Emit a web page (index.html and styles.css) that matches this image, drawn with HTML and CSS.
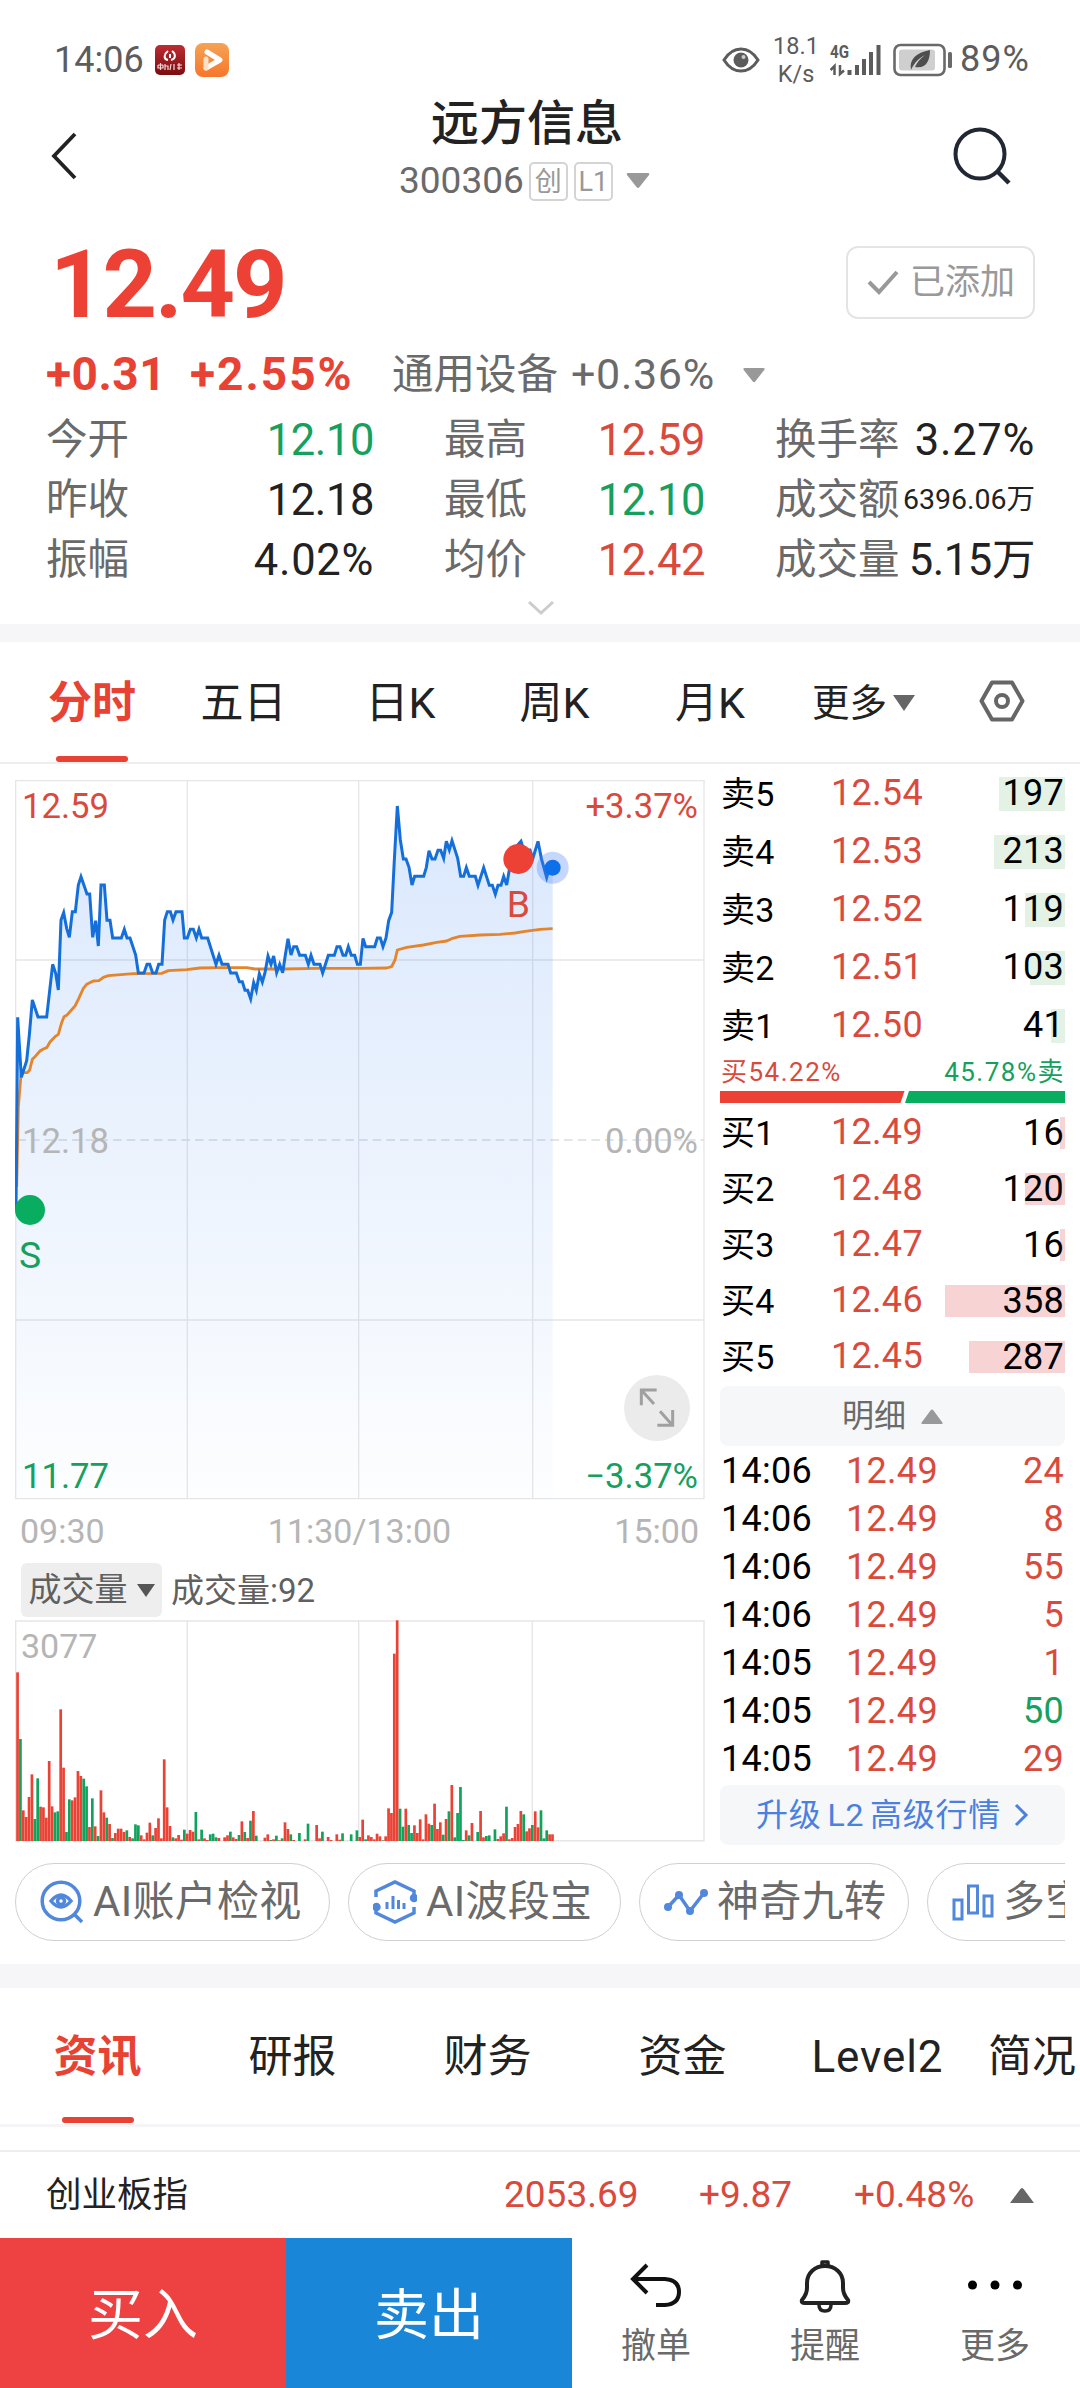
FILE: index.html
```html
<!DOCTYPE html>
<html lang="zh-CN">
<head>
<title>远方信息 300306</title>
<meta charset="utf-8">
<meta name="viewport" content="width=1080" />
<link rel="stylesheet" href="styles.css">
</head>
<body>
<div class="phone">

	<div class="status">
		<span class="clock">14:06</span>
		<svg class="app_red" width="30" height="30" viewBox="0 0 30 30">
			<defs><linearGradient id="g_red" x1="0" y1="0" x2="0" y2="1"><stop offset="0" stop-color="#bd2c32"/><stop offset="1" stop-color="#7b0d10"/></linearGradient></defs>
			<rect width="30" height="30" rx="5" fill="url(#g_red)"/>
			<path d="M13 6c-4 3-5 8 0 9M17 6c4 3 4 8-1 9M15 9v4" fill="none" stroke="#fff" stroke-width="2"/>
			<path d="M3 20h5M5.500 18v7M3 20v3h5v-3M10 19v6M10 21h3v4M16 19l-1 6M19 19v6M22 20h5M24 18v7M22 23h5" fill="none" stroke="#f3dada" stroke-width="1.200"/>
		</svg>
		<svg class="app_orange" width="34" height="34" viewBox="0 0 34 34">
			<defs><linearGradient id="g_or" x1="0" y1="0" x2="0" y2="1"><stop offset="0" stop-color="#f7a354"/><stop offset="1" stop-color="#f5762b"/></linearGradient></defs>
			<rect width="34" height="34" rx="8" fill="url(#g_or)"/>
			<path d="M12 9l13 8-14 8" fill="none" stroke="#fff" stroke-width="5" stroke-linejoin="round" stroke-linecap="round"/>
			<path d="M11 25v-9" stroke="#ffe0c4" stroke-width="5" stroke-linecap="round"/>
		</svg>
		<svg class="eye" width="38" height="26" viewBox="0 0 38 26">
			<path d="M2 13C7 5 13 2 19 2s12 3 17 11c-5 8-11 11-17 11S7 21 2 13z" fill="none" stroke="#5c5c5c" stroke-width="3"/>
			<circle cx="19" cy="13" r="7.500" fill="#5c5c5c"/><circle cx="21.500" cy="10" r="2" fill="#ccc"/>
		</svg>
		<div class="speed"><span>18.1</span><span>K/s</span></div>
		<svg class="signal" width="52" height="34" viewBox="0 0 52 34">
			<text x="0" y="15" class="net" textLength="19" lengthAdjust="spacingAndGlyphs">4G</text>
			<path d="M4.500 32V23l-4 4M10 22v9l4-3.500" fill="none" stroke="#5c5c5c" stroke-width="2.500"/>
			<path d="M19.500 32v-5M27 32V22M34 32V16M41 32V9M48.500 32V2" stroke="#5c5c5c" stroke-width="4"/>
		</svg>
		<svg class="battery" width="60" height="34" viewBox="0 0 60 34">
			<rect x="1.500" y="2" width="50" height="30" rx="6" fill="none" stroke="#6a6a6a" stroke-width="2.600"/>
			<rect x="6" y="6.500" width="36" height="21" rx="3" fill="#cfcfcf"/>
			<path d="M18 27c-2-11 5-17 19-20 0 11-4 19-15 17 2-5 6-9 10-12-6 3-11 8-14 15z" fill="#4e4e4e"/>
			<rect x="55" y="9" width="4" height="16" rx="1.500" fill="#6a6a6a"/>
		</svg>
		<span class="percent">89%</span>
	</div>

	<header class="top">
		<svg class="back" width="30" height="50" viewBox="0 0 30 50"><path d="M25 3L4 25l21 22" fill="none" stroke="#222" stroke-width="3.800"/></svg>
		<div class="stock">
			<h1>远方信息</h1>
			<div class="code">
				<span>300306</span><i class="badge">创</i><i class="badge">L1</i>
				<svg width="24" height="16" viewBox="0 0 24 16"><path d="M2 0h20q2 0 1 2L13.500 14q-1.500 2-3 0L1 2Q0 0 2 0z" fill="#999"/></svg>
			</div>
		</div>
		<svg class="search" width="60" height="60" viewBox="0 0 60 60"><circle cx="28" cy="28" r="24.500" fill="none" stroke="#222734" stroke-width="4"/><path d="M45 45l12 12" stroke="#222734" stroke-width="4.500"/></svg>
	</header>

	<section class="quote">
		<div class="price_row">
			<span class="price">12.49</span>
			<div class="added">
				<svg width="32" height="26" viewBox="0 0 32 26"><path d="M2 12l10 10L30 2" fill="none" stroke="#999" stroke-width="4"/></svg>
				<span>已添加</span>
			</div>
		</div>
		<div class="change">
			<b>+0.31</b><b class="pct">+2.55%</b>
			<span class="sector">通用设备</span><span class="sector_pct">+0.36%</span>
			<svg width="24" height="15" viewBox="0 0 24 16"><path d="M2 0h20q2 0 1 2L13.500 14q-1.500 2-3 0L1 2Q0 0 2 0z" fill="#999"/></svg>
		</div>
		<div class="stats">
			<div><label>今开</label><em class="down">12.10</em></div>
			<div><label>最高</label><em class="up">12.59</em></div>
			<div><label>换手率</label><em class="wide">3.27%</em></div>
			<div><label>昨收</label><em>12.18</em></div>
			<div><label>最低</label><em class="down">12.10</em></div>
			<div><label>成交额</label><em class="small">6396.06万</em></div>
			<div><label>振幅</label><em class="wide">4.02%</em></div>
			<div><label>均价</label><em class="up">12.42</em></div>
			<div><label>成交量</label><em>5.15万</em></div>
		</div>
		<svg class="expand" width="28" height="16" viewBox="0 0 28 16"><path d="M2 2l12 11L26 2" fill="none" stroke="#ccc" stroke-width="3"/></svg>
	</section>

	<nav class="periods">
		<span class="on">分时</span><span>五日</span><span class="day">日K</span><span>周K</span><span>月K</span>
		<span class="more">更多<svg width="24" height="16" viewBox="0 0 24 16"><path d="M1 0h22L12 16z" fill="#666"/></svg></span>
		<span class="gear"><svg width="46" height="42" viewBox="0 0 46 42"><path d="M13 2.500h20L43.500 21 33 39.500H13L2.500 21z" fill="none" stroke="#666" stroke-width="4" stroke-linejoin="round"/><circle cx="23" cy="21" r="6" fill="none" stroke="#666" stroke-width="4"/></svg></span>
	</nav>

	<section class="market">
		<div class="charts">
			<!-- minute line: 3 units = 1px, 8.78px per 0.01 -->
			<svg class="line_chart" width="690" height="720" viewBox="45 30 2070 2160">
				<defs><linearGradient id="g_area" gradientUnits="userSpaceOnUse" x1="0" y1="100" x2="0" y2="2180"><stop offset="0" stop-color="#0a66f0" stop-opacity=".15"/><stop offset="1" stop-color="#0a66f0" stop-opacity=".01"/></linearGradient></defs>
				<g fill="none" stroke="#e6e6e8" stroke-width="4">
					<path d="M47 32H2112V2186H47zM562 32V2186M1076 32V2186M1598 32V2186"/>
					<path d="M47 570H2112M47 1650H2112" stroke-width="5"/>
					<path d="M52 1110H2112" stroke-dasharray="26 15" stroke="#dcdde0"/>
				</g>
				<polygon id="area" fill="url(#g_area)"/>
				<polyline class="avg" points="50,1250 52,1155 55,1010 63,915 70,908 82,908 89,900 97,868 105,860 120,843 130,837 140,833 150,816 165,800 175,793 185,758 192,740 200,736 225,708 235,688 250,655 260,643 280,633 297,632 310,622 325,617 400,611 485,610 505,602 560,599 600,594 650,593 740,593 765,597 850,597 950,595 1080,595 1160,594 1175,590 1185,570 1192,540 1220,532 1270,525 1310,517 1340,513 1355,506 1380,499 1440,495 1500,493 1545,489 1575,484 1620,478 1658,476"/>
				<polyline class="now" id="now" points="48,1320 53,742 64,922 80,872 88,795 97,690 114,741 140,741 158,583 167,610 175,660 183,450 191,428 200,475 208,502 217,425 226,425 235,345 243,320 261,372 269,372 278,502 287,452 295,528 303,345 313,345 321,451 330,451 338,504 364,504 373,478 381,504 390,504 407,555 415,609 432,609 441,583 449,583 458,609 468,609 476,583 486,583 494,450 502,425 511,425 519,450 528,425 546,425 553,504 562,504 571,478 580,478 589,504 597,478 605,504 623,504 648,583 657,556 666,583 684,583 692,609 709,609 718,635 727,635 735,661 743,661 752,687 761,638 769,661 778,611 787,636 795,608 804,558 813,583 821,558 830,608 839,583 848,608 856,555 864,506 873,555 881,530 890,530 899,556 916,556 925,583 933,556 942,583 960,583 968,609 985,556 1003,556 1011,530 1020,530 1029,556 1037,556 1045,530 1054,556 1064,556 1072,583 1081,583 1089,505 1097,530 1124,530 1132,504 1141,504 1149,530 1158,504 1166,452 1175,427 1183,270 1192,108 1201,210 1210,267 1218,267 1227,292 1236,345 1244,319 1271,319 1279,292 1287,242 1296,267 1305,267 1314,241 1322,241 1331,265 1339,214 1348,240 1356,212 1373,265 1382,319 1391,319 1399,293 1408,319 1426,319 1434,346 1451,293 1468,346 1477,346 1486,373 1494,346 1503,346 1511,319 1520,345 1529,293 1540,240 1563,214 1571,240 1590,240 1598,267 1614,214 1624,265 1640,322 1648,293 1658,293"/>
				<g class="axis">
					<text x="66" y="143" class="red">12.59</text>
					<text x="2094" y="143" class="red end">+3.37%</text>
					<text x="66" y="1148">12.18</text>
					<text x="2094" y="1148" class="end">0.00%</text>
					<text x="66" y="2153" class="green">11.77</text>
					<text x="2094" y="2153" class="green end">−3.37%</text>
				</g>
				<circle cx="90" cy="1320" r="45" fill="#09ad5f"/>
				<text x="90" y="1495" class="mark green">S</text>
				<circle cx="1555" cy="267" r="45" fill="#ee4135"/>
				<text x="1555" y="442" class="mark red">B</text>
				<circle cx="1658" cy="293" r="48" fill="#3f7bf5" fill-opacity=".3"/>
				<circle cx="1658" cy="293" r="24" fill="#0d70ea"/>
				<circle cx="1971" cy="1914" r="99" fill="#ebebeb"/>
				<path d="M1924 1906V1860H1970M1926 1862L1962 1902M2018 1920V1966H1972M2016 1964L1980 1924" fill="none" stroke="#a0a0a0" stroke-width="9"/>
			</svg>
			<div class="times"><span>09:30</span><span>11:30/13:00</span><span>15:00</span></div>
			<div class="vol_head">
				<span class="vol_btn">成交量<svg width="18" height="13" viewBox="0 0 18 13"><path d="M0 0h18L9 13z" fill="#555"/></svg></span>
				<span>成交量:92</span>
			</div>
			<svg class="vol_chart" width="690" height="222" viewBox="0 0 690 222">
				<path d="M.700 1H689V220.700H.700zM172.300 1V221M343.700 1V221M517.300 1V221" fill="none" stroke="#e6e6e8" stroke-width="1.400"/>
				<g id="bars"></g>
				<text x="6" y="38" class="max">3077</text>
			</svg>
		</div>

		<div class="book">
			<div class="sell">
				<div><span>卖5</span><em>12.54</em><i style="--w:66px">197</i></div>
				<div><span>卖4</span><em>12.53</em><i style="--w:71px">213</i></div>
				<div><span>卖3</span><em>12.52</em><i style="--w:40px">119</i></div>
				<div><span>卖2</span><em>12.51</em><i style="--w:35px">103</i></div>
				<div><span>卖1</span><em>12.50</em><i style="--w:14px">41</i></div>
			</div>
			<div class="ratio"><span class="up">买54.22%</span><span class="down">45.78%卖</span></div>
			<svg class="ratio_bar" width="345" height="12" viewBox="0 0 345 12"><path d="M0 0H184.500L180.500 12H0z" fill="#ee4135"/><path d="M189 0H345V12H185z" fill="#09ad5f"/></svg>
			<div class="buy">
				<div><span>买1</span><em>12.49</em><i style="--w:5px">16</i></div>
				<div><span>买2</span><em>12.48</em><i style="--w:40px">120</i></div>
				<div><span>买3</span><em>12.47</em><i style="--w:5px">16</i></div>
				<div><span>买4</span><em>12.46</em><i style="--w:120px">358</i></div>
				<div><span>买5</span><em>12.45</em><i style="--w:96px">287</i></div>
			</div>
			<div class="detail">明细<svg width="22" height="15" viewBox="0 0 22 15"><path d="M2 15h18q3 0 1-2L12.500 1.500q-1.500-2-3 0L1 13q-2 2 1 2z" fill="#999"/></svg></div>
			<div class="ticks">
				<div><span>14:06</span><em>12.49</em><i>24</i></div>
				<div><span>14:06</span><em>12.49</em><i>8</i></div>
				<div><span>14:06</span><em>12.49</em><i>55</i></div>
				<div><span>14:06</span><em>12.49</em><i>5</i></div>
				<div><span>14:05</span><em>12.49</em><i>1</i></div>
				<div><span>14:05</span><em>12.49</em><i class="down">50</i></div>
				<div><span>14:05</span><em>12.49</em><i>29</i></div>
			</div>
			<div class="upgrade">升级<span>L2</span>高级行情<svg width="15" height="24" viewBox="0 0 15 24"><path d="M2 2l10 10L2 22" fill="none" stroke="#4a80df" stroke-width="3"/></svg></div>
		</div>
	</section>

	<div class="tools">
		<span class="t1"><svg width="44" height="44" viewBox="0 0 44 44" fill="none" stroke="#5188dc" stroke-width="3.500"><circle cx="21" cy="21" r="18.800"/><path d="M34 34l8 8M11 21q10-12 20 0q-10 12-20 0z"/><circle cx="21" cy="21" r="3.500"/></svg>AI账户检视</span>
		<span class="t2"><svg width="44" height="44" viewBox="0 0 44 44" fill="none" stroke="#5188dc" stroke-width="3.500"><path d="M3 17v-6L22 2l19 9v6M41 27v6L22 42 3 33v-6"/><circle cx="41" cy="18" r="2.500" fill="#5188dc"/><circle cx="3.500" cy="27" r="2.500" fill="#5188dc"/><path d="M14 29v-7M20 29V16M25.500 29v-9M31 29v-6" stroke-width="3"/></svg>AI波段宝</span>
		<span class="t3"><svg width="44" height="28" viewBox="0 0 44 28" fill="none" stroke="#5188dc" stroke-width="3.500"><path d="M4 19L15 7l11 16L40 5"/><g fill="#5188dc" stroke="none"><circle cx="4" cy="19" r="4"/><circle cx="15" cy="7" r="4"/><circle cx="26" cy="23" r="4"/><circle cx="40" cy="5" r="4"/></g></svg>神奇九转</span>
		<span class="t4"><svg width="42" height="38" viewBox="0 0 42 38" fill="none" stroke="#5188dc" stroke-width="3"><path d="M2 17h8v19H2zM16.500 3h9v27h-9zM32 13h8v20h-8z"/></svg>多空</span>
	</div>

	<nav class="info">
		<span class="on">资讯</span><span>研报</span><span>财务</span><span>资金</span><span class="lv">Level2</span><span class="last">简况</span>
	</nav>

	<div class="index_row">
		<span class="name">创业板指</span><em>2053.69</em><em>+9.87</em><em>+0.48%</em>
		<svg width="24" height="15" viewBox="0 0 24 15"><path d="M0 15h24L14 1.500q-2-3-4 0z" fill="#666"/></svg>
	</div>

	<footer class="actions">
		<div class="btn buy_btn">买入</div>
		<div class="btn sell_btn">卖出</div>
		<div class="act"><svg width="54" height="54" viewBox="0 0 54 54"><path d="M18 6L4 20l14 14M4 20H36Q50 21 50 33T36 46H27" fill="none" stroke="#111" stroke-width="4"/></svg>撤单</div>
		<div class="act"><svg width="54" height="54" viewBox="0 0 54 54" fill="none" stroke="#222" stroke-width="4" stroke-linejoin="round"><path d="M7 44q-4 0-3-3 5-6 5-12v-5C9 14 17 7 27 7s18 7 18 17v5q0 6 5 12 1 3-3 3z"/><path d="M24 7V3h6v4M21 46q0 6 6 6t6-6" stroke-width="3.500"/></svg>提醒</div>
		<div class="act"><svg width="54" height="54" viewBox="0 0 54 54"><circle cx="4.500" cy="26" r="4.500"/><circle cx="27" cy="26" r="4.500"/><circle cx="49.500" cy="26" r="4.500"/></svg>更多</div>
	</footer>
</div>

<script type="text/javascript">
	// one entry per minute, r = up, g = down, height in thirds of a pixel
	var vol = "r506 g306 r92 r72 r132 r200 g66 g188 r103 r101 r70 r240 r104 g86 g89 r395 r220 g27 g125 r122 r131 r210 r195 g187 g164 r42 g128 r44 g15 r152 r86 g70 r51 g9 r24 r37 r37 r27 g32 r12 g8 g50 g47 r17 r5 r25 r55 g17 r39 r68 r8 r245 r101 r45 g11 r8 r18 r4 g34 r22 r33 r28 g87 r5 g34 r8 r3 g20 g22 g11 r9 r0 r11 r17 g28 r11 r6 g18 r59 g27 r9 g61 r90 g16 r0 r0 r10 r20 g3 r5 g16 r2 g8 r56 r36 g20 r3 r0 g24 r0 r5 g52 r0 r0 r48 r8 g28 r0 r12 r3 r0 r20 r4 g23 r0 r0 g20 r0 g32 r12 r64 g5 r17 r12 r5 r22 r14 g2 r14 r98 r84 r562 r662 g97 g43 r97 g48 g24 r47 r24 r65 r5 r80 r52 g48 r112 r36 r56 g19 r66 g89 r168 g11 g84 g162 g3 r32 g17 r54 r0 g27 r90 r11 g15 g17 r0 g35 r6 r14 r23 g103 r5 r9 r42 r51 r90 g80 r29 r38 g48 r89 r41 g92 g8 g32 r20 r20".split(" ");
	var out = "";
	for (var i = 0; i < vol.length; i++){
		var h = vol[i].substring(1) / 3;
		out += '<rect x="' + (1.2 + i * 2.876) + '" y="' + (221 - h) + '" width="2.7" height="' + h + '" fill="' + (vol[i].charAt(0) == "r" ? "#ea4335" : "#10a35c") + '"/>';
	}
	document.getElementById("bars").innerHTML = out;

	// the shaded area follows the price line
	var now = document.getElementById("now").getAttribute("points");
	document.getElementById("area").setAttribute("points", now + " 1658,2184 48,2184");
</script>
</body>
</html>
```
FILE: styles.css
```css
*{ box-sizing: border-box;}
body{
	margin: 0;
	background: #fff;
	color: #222;
	font-family: Roboto, "Noto Sans CJK SC", sans-serif;
	font-size: 36px;
	line-height: 1.2;
}
em, i{ font-style: normal;}
svg{ display: block; flex: none;}
.phone{
	width: 1080px;
	height: 2388px;
	overflow: hidden;
}
.up{ color: #d94a3d;}
.down{ color: #16a05d;}

/* status bar */
.status{
	display: flex;
	align-items: center;
	height: 90px;
	padding: 30px 46px 0 54px;
	color: #5c5c5c;
}
.status > *{ flex: none;}
.clock{ font-size: 36px; width: 101px; line-height: 60px;}
.app_orange{ margin-left: 10px;}
.eye{ margin-left: 493px;}
.speed{
	display: flex;
	flex-direction: column;
	align-items: center;
	width: 46px;
	margin: 0 11px 0 13px;
	font-size: 23.5px;
	line-height: 28px;
}
.net{ font: bold 19px Roboto; fill: #5c5c5c;}
.battery{ margin-left: 11px;}
.percent{ margin-left: 7px; font-size: 36px; letter-spacing: 1px;}

/* title */
.top{
	display: flex;
	justify-content: space-between;
	height: 140px;
	padding: 0 68px 0 50px;
}
.back{ margin-top: 41px;}
.search{ margin-top: 36px;}
.stock{ margin-left: 22px; width: 256px; white-space: nowrap;}
.stock h1{
	margin: 0;
	font-size: 48px;
	font-weight: 500;
	line-height: 68px;
	text-align: center;
	width: 256px;
}
.code{
	display: flex;
	align-items: center;
	height: 46px;
	color: #6a6a6a;
	font-size: 37px;
}
.badge{
	width: 39px;
	height: 39px;
	margin-left: 6px;
	border: 2px solid #d4d4d4;
	border-radius: 5px;
	color: #999;
	font-size: 27px;
	line-height: 37px;
	text-align: center;
}
.code .badge:nth-child(2){ margin-left: 5px;}
.code svg{ margin-left: 13px;}

/* quote */
.quote{
	height: 412px;
	padding: 0 45px 0 46px;
	border-bottom: 18px solid #f6f6f8;
}
.price_row{
	display: flex;
	justify-content: space-between;
	height: 110px;
	padding-top: 16px;
}
.price{
	margin-left: 4px;
	color: #ee4135;
	font-size: 95px;
	font-weight: bold;
	letter-spacing: -2px;
	line-height: 78px;
}
.added{
	display: flex;
	align-items: center;
	gap: 11px;
	width: 189px;
	height: 73px;
	padding-left: 19px;
	border: 2px solid #e4e4e4;
	border-radius: 12px;
	color: #999;
	font-size: 35px;
}
.change{
	display: flex;
	align-items: center;
	height: 70px;
	color: #6a6a6a;
}
.change b{ color: #e84235; font-size: 46px; width: 144px; letter-spacing: .5px;}
.change .pct{ width: 202px; letter-spacing: 2px;}
.sector{ font-size: 41.5px; width: 179px;}
.sector_pct{ font-size: 43px; width: 171px; letter-spacing: .7px;}
.stats{
	display: grid;
	grid-template-columns: 328px 261px 260px;
	column-gap: 70px;
	grid-auto-rows: 60px;
}
.stats div{
	display: flex;
	align-items: center;
	justify-content: space-between;
	white-space: nowrap;
}
.stats label{ color: #6a6a6a; font-size: 41.5px; margin-right: -4px;}
.stats em{ font-size: 43.5px; letter-spacing: -.4px; padding-top: 2px;}
.stats .wide{ letter-spacing: .7px;}
.stats .small{ font-size: 28.5px; letter-spacing: 0; padding: 0;}
.expand{ margin: 10px auto 0;}

/* period tabs */
.periods{
	display: grid;
	grid-template-columns: 184px 119px 200px 103px 208px 102px 1fr;
	height: 122px;
	border-bottom: 2px solid #eee;
	font-size: 43px;
	line-height: 122px;
	text-align: center;
	white-space: nowrap;
}
.on{
	display: flex;
	flex-direction: column;
	align-items: center;
	color: #e84235;
	font-weight: bold;
	font-size: 44px;
}
.on:after{
	content: "";
	width: 72px;
	height: 6px;
	margin-top: -8px;
	border-radius: 3px;
	background: #e84235;
}
.day{ padding-right: 5px;}
.more{ display: flex; align-items: center; gap: 5px; font-size: 37.5px; margin-left: -2px;}
.gear{ padding: 38px 0 0 63px;}

/* charts */
.market{
	display: flex;
	height: 1084px;
	padding-left: 15px;
}
.charts{ width: 690px; padding-top: 16px;}
.line_chart text{ font-family: Roboto; fill: #b5b5b5; font-size: 104px;}
.line_chart .red{ fill: #d94a3d;}
.line_chart .green{ fill: #16a05d;}
.line_chart .end{ text-anchor: end;}
.line_chart .mark{ font-size: 112px; text-anchor: middle;}
.avg{ fill: none; stroke: #e5852b; stroke-width: 8.5; stroke-linejoin: round;}
.now{ fill: none; stroke: #146fda; stroke-width: 9;}
.times{
	display: flex;
	justify-content: space-between;
	height: 63px;
	padding: 0 6px 0 5px;
	color: #b5b5b5;
	font-size: 34px;
	line-height: 62px;
}
.vol_head{
	display: flex;
	gap: 9px;
	height: 57px;
	padding-left: 6px;
	color: #606060;
	font-size: 33px;
	line-height: 56px;
}
.vol_btn{
	display: flex;
	align-items: center;
	justify-content: center;
	gap: 9px;
	width: 141px;
	height: 54px;
	border-radius: 6px;
	background: #eee;
}
.max{ font: 34px Roboto; fill: #b5b5b5;}

/* order book */
.book{ width: 345px; margin-left: 15px;}
.sell, .buy, .ticks{ color: #000; font-size: 36px; letter-spacing: .3px;}
.sell > div, .buy > div, .ticks > div{
	display: grid;
	grid-template-columns: 110px 100px 1fr;
	align-items: center;
	height: 58px;
	padding-left: 1px;
}
.sell{ padding-top: 1px;}
.buy > div{ height: 56px;}
.sell span, .buy span{ font-size: 34px;}
.book em{ color: #d94a3d;}
.sell i, .buy i{
	height: 34px;
	padding-right: 1px;
	line-height: 33px;
	text-align: right;
	background: linear-gradient(#e3f2e4, #e3f2e4) no-repeat right / var(--w) 100%;
}
.buy i{
	height: 32px;
	background-image: linear-gradient(#f8d3d3, #f8d3d3);
}
.ratio{
	display: flex;
	justify-content: space-between;
	padding: 0 0 0 1px;
	height: 36px;
	font-size: 26px;
	letter-spacing: 1.5px;
	line-height: 35px;
}
.ratio_bar{ margin-bottom: 2px;}
.detail, .upgrade{
	display: flex;
	align-items: center;
	justify-content: center;
	height: 60px;
	border-radius: 8px;
	background: #f6f7f9;
	color: #6a6a6a;
	font-size: 32px;
}
.detail{ gap: 15px; margin-top: 1px;}
.ticks{ padding-top: 2px; height: 339px;}
.ticks > div{ grid-template-columns: 125px 120px 1fr; height: 48px;}
.ticks i{ text-align: right; padding-right: 1px; color: #d94a3d;}
.ticks i.down{ color: #16a05d;}
.upgrade{ color: #4a80df; letter-spacing: .7px;}
.upgrade span{ margin: 0 6px;}
.upgrade svg{ margin-left: 13px;}

/* tool chips */
.tools{
	display: flex;
	gap: 18px;
	width: 1050px;
	height: 117px;
	margin-left: 15px;
	padding-top: 15px;
	overflow: hidden;
}
.tools span{
	display: flex;
	flex: none;
	align-items: center;
	gap: 9px;
	height: 78px;
	padding-left: 24px;
	border: 1.5px solid #d0d0d0;
	border-radius: 39px;
	color: #6a6a6a;
	font-size: 42px;
	letter-spacing: .3px;
	white-space: nowrap;
}
.t1{ width: 315px;}
.t2{ width: 273px;}
.t3{ width: 270px;}
.t4{ width: 250px;}

/* info tabs */
.info{
	display: grid;
	grid-template-columns: repeat(5, 195px) 105px;
	height: 163px;
	border-top: 24px solid #f6f6f8;
	border-bottom: 3px solid #f5f5f7;
	margin-top: -1px;
	font-size: 44px;
	line-height: 138px;
	text-align: center;
	white-space: nowrap;
}
.info .on:after{ margin-top: -9px;}
.info .last{ margin-left: 13px; text-align: left;}
.lv{ letter-spacing: .9px;}

.index_row{
	display: grid;
	grid-template-columns: 458px 195px 155px 156px 24px;
	align-items: center;
	height: 88px;
	margin-top: 23px;
	padding-left: 46px;
	border-top: 2px solid #eee;
	color: #d94a3d;
	font-size: 37px;
}
.index_row .name{ color: #222; font-size: 35.5px;}

/* bottom buttons */
.actions{
	display: grid;
	grid-template-columns: 286px 286px 168px 170px 170px;
	height: 150px;
}
.btn{
	color: #fff;
	font-size: 55px;
	line-height: 154px;
	text-align: center;
}
.buy_btn{ background: #ee4242;}
.sell_btn{ background: #1a86d8;}
.act{
	display: flex;
	flex-direction: column;
	align-items: center;
	padding-top: 21px;
	color: #6a6a6a;
	font-size: 35px;
	line-height: 68px;
}
```
